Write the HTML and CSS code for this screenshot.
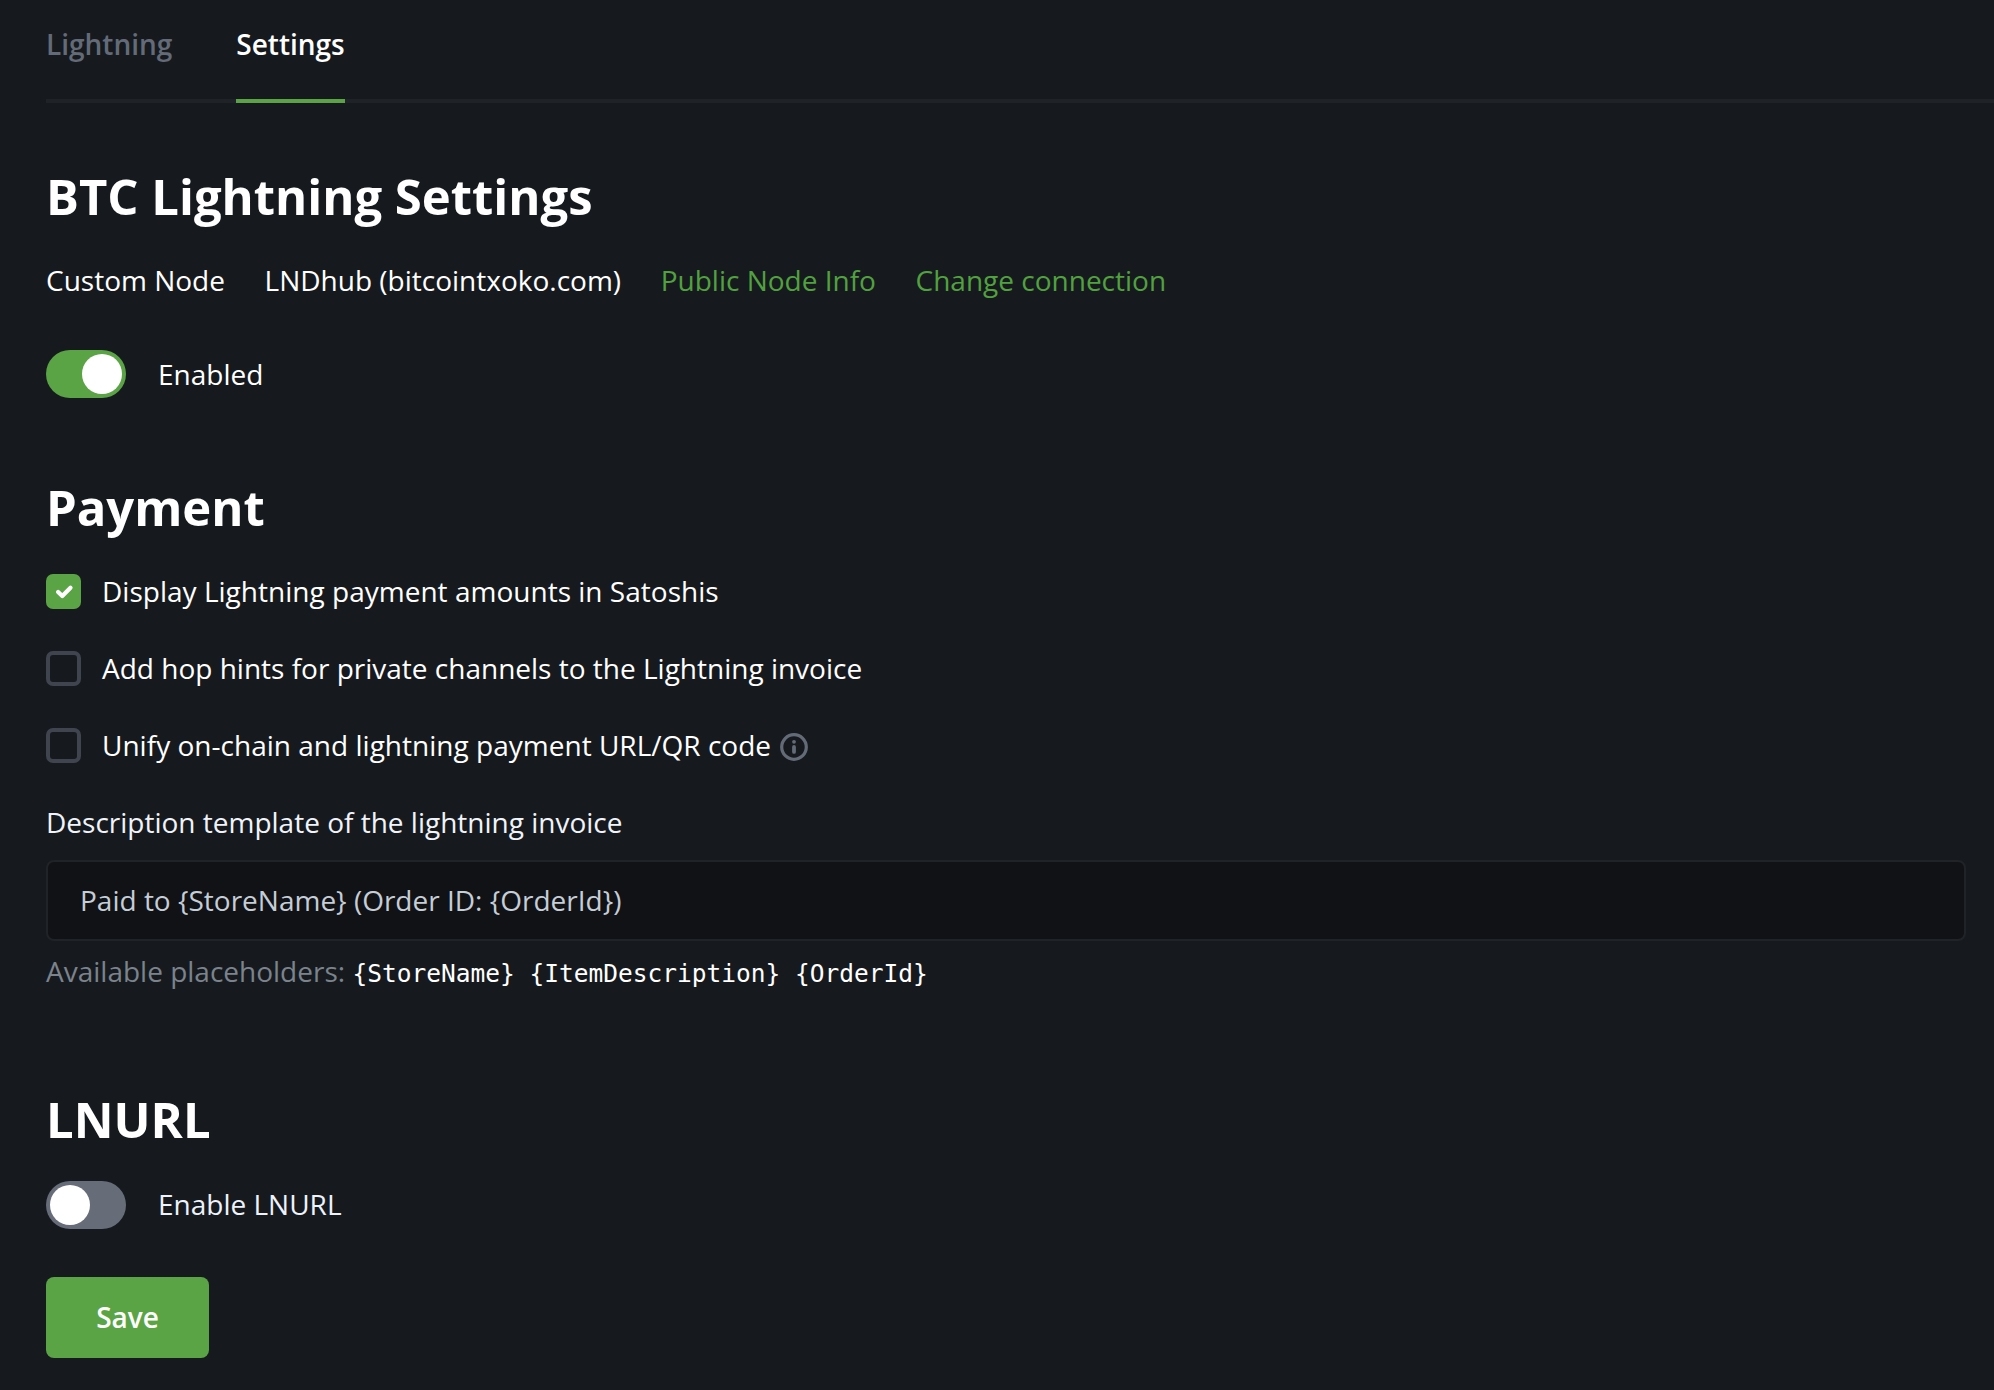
FILE: index.html
```html
<!DOCTYPE html>
<html lang="en">
<head>
<meta charset="utf-8">
<title>BTC Lightning Settings</title>
<link rel="stylesheet" href="styles.css">
</head>
<body>
<nav class="tabs">
  <a class="tab">Lightning</a>
  <a class="tab tab-active">Settings</a>
</nav>
<main class="content">
  <h2 class="title">BTC Lightning Settings</h2>
  <div class="node">
    <span>Custom Node</span>
    <span>LNDhub (bitcointxoko.com)</span>
    <a class="link">Public Node Info</a>
    <a class="link">Change connection</a>
  </div>
  <div class="switch-row">
    <span class="switch switch-on"><span class="knob"></span></span>
    <span>Enabled</span>
  </div>

  <h2 class="title title-payment">Payment</h2>
  <div class="checks">
    <div class="check-row">
      <span class="box box-checked">
        <svg class="tick" viewBox="0 0 35 35"><path d="M12.100 17.900l4.200 4.100L24.500 13.700" fill="none" stroke="#fff" stroke-width="4.200" stroke-linecap="round" stroke-linejoin="round"/></svg>
      </span>
      <span class="check-text">Display Lightning payment amounts in Satoshis</span>
    </div>
    <div class="check-row">
      <span class="box"></span>
      <span>Add hop hints for private channels to the Lightning invoice</span>
    </div>
    <div class="check-row">
      <span class="box"></span>
      <span class="check-text">Unify on-chain and lightning payment URL/QR code</span>
      <svg class="info" viewBox="0 0 28 28"><circle cx="14" cy="14" r="12.300" fill="none" stroke="#636b77" stroke-width="3.200"/><circle cx="14" cy="8.800" r="1.900" fill="#636b77"/><path d="M14 13.900v5" stroke="#636b77" stroke-width="3.800" stroke-linecap="round"/></svg>
    </div>
  </div>
  <div class="label">Description template of the lightning invoice</div>
  <div class="input">Paid to {StoreName} (Order ID: {OrderId})</div>
  <div class="hint">Available placeholders: <code class="code">{StoreName} {ItemDescription} {OrderId}</code></div>

  <h2 class="title title-lnurl">LNURL</h2>
  <div class="switch-row switch-row-lnurl">
    <span class="switch"><span class="knob"></span></span>
    <span class="switch-text">Enable LNURL</span>
  </div>
  <button class="save">Save</button>
</main>
</body>
</html>
```
FILE: styles.css
```css
* { box-sizing: border-box; }
body {
  margin: 0;
  height: 1390px;
  overflow: hidden;
  background: #161a1e;
  color: #fff;
  font: 400 28px/42px "Open Sans", "Noto Sans", sans-serif;
}
.tabs {
  display: flex;
  gap: 64px;
  height: 103px;
  margin-left: 46px;
  padding-top: 23px;
  border-bottom: 4px solid #1f2328;
}
.tab { height: 80px; font-weight: 600; color: #646b78; }
.tab-active { color: #fff; border-bottom: 4px solid #5aa445; }
.content { padding: 63px 28px 0 46px; }
.title { margin: 0; font-size: 49px; line-height: 60px; font-weight: 700; }
.node { display: flex; gap: 39.6px; margin-top: 33px; }
.link { color: #51a13e; }
.switch-row { display: flex; align-items: center; gap: 32px; height: 48px; margin-top: 49px; }
.switch { display: flex; width: 80px; height: 48px; padding: 4px; border-radius: 24px; background: #666d78; }
.switch-on { justify-content: flex-end; background: #5aa445; }
.knob { width: 40px; height: 40px; border-radius: 50%; background: #fff; }
.switch-text { padding-bottom: 2px; }
.title-payment { margin-top: 79px; }
.checks { display: grid; gap: 35px; margin-top: 33px; }
.check-row { display: flex; align-items: center; height: 42px; }
.check-text { letter-spacing: 0.015px; }
.box { width: 35px; height: 35px; margin-right: 21px; border: 4px solid #40444f; border-radius: 7px; }
.box-checked { border: 0; background: #5aa445; }
.tick { display: block; width: 35px; height: 35px; }
.info { width: 28px; height: 28px; margin: 4px 0 0 9px; }
.label { margin-top: 35px; color: #f0f4fa; }
.input {
  height: 81px;
  margin-top: 17px;
  padding: 17px 32px;
  border: 2px solid #202328;
  border-radius: 8px;
  background: #111216;
  color: #c5cdd6;
}
.hint { height: 42px; margin-top: 9px; color: #7b838c; }
.code { color: #fff; font: 24.5px "DejaVu Sans Mono", monospace; }
.title-lnurl { margin-top: 97px; }
.switch-row-lnurl { margin-top: 32px; color: #edf2fb; }
.save {
  display: block;
  width: 163px;
  height: 81px;
  margin-top: 48px;
  padding: 0 0 2px;
  border: 0;
  border-radius: 8px;
  background: #5aa445;
  color: #fff;
  font: 600 28px/42px "Open Sans", "Noto Sans", sans-serif;
}
```
